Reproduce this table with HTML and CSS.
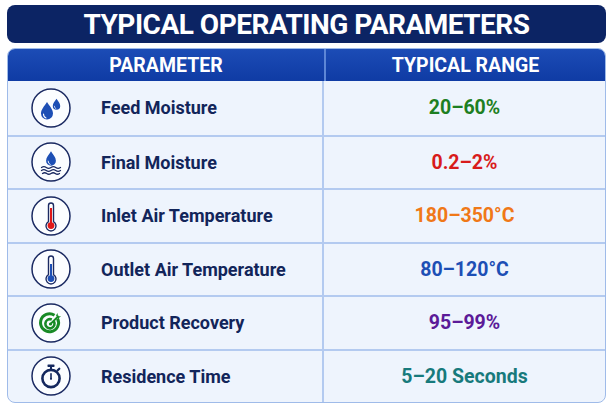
FILE: index.html
```html
<!DOCTYPE html>
<html>
<head>
<meta charset="utf-8">
<link rel="stylesheet" href="styles.css">
</head>
<body>
<div class="page">
  <h1 class="title">TYPICAL OPERATING PARAMETERS</h1>
  <div class="table">
    <div class="head">
      <div class="hcell">PARAMETER</div>
      <div class="hcell">TYPICAL RANGE</div>
    </div>
    <div class="row">
      <div class="pcell">
        <svg class="icon" viewBox="0 0 40 40">
          <circle cx="20" cy="20" r="19" class="ring"/>
          <path class="drop" transform="translate(16 24)" d="M0,-10 C2.5,-6 6,-2.5 6,1.5 A6,6 0 0 1 -6,1.5 C-6,-2.5 -2.5,-6 0,-10Z"/>
          <path class="hl" transform="translate(16 24)" d="M-3.5,2 Q-3.5,5 -1,6" />
          <path class="drop" transform="translate(25.5 17) scale(0.62)" d="M0,-10 C2.5,-6 6,-2.5 6,1.5 A6,6 0 0 1 -6,1.5 C-6,-2.5 -2.5,-6 0,-10Z"/>
          <path class="hl" transform="translate(25.5 17) scale(0.62)" d="M-3.5,2 Q-3.5,5 -1,6" />
        </svg>
        <span class="label">Feed Moisture</span>
      </div>
      <div class="vcell green">20–60%</div>
    </div>
    <div class="row">
      <div class="pcell">
        <svg class="icon" viewBox="0 0 40 40">
          <circle cx="20" cy="20" r="19" class="ring"/>
          <path class="drop" transform="translate(20 17.5) scale(0.82)" d="M0,-10 C2.5,-6 6,-2.5 6,1.5 A6,6 0 0 1 -6,1.5 C-6,-2.5 -2.5,-6 0,-10Z"/>
          <path class="hl" transform="translate(20 17.5) scale(0.82)" d="M-3.5,2 Q-3.5,5 -1,6" />
          <path class="wave" d="M10.5 25.5 q2.4 -1.6 4.75 0 t4.75 0 t4.75 0 t4.75 0"/>
          <path class="wave" d="M10.5 28.5 q2.4 -1.6 4.75 0 t4.75 0 t4.75 0 t4.75 0"/>
          <path class="wave" d="M11.5 31.5 q2.2 -1.5 4.25 0 t4.25 0 t4.25 0 t4.25 0"/>
        </svg>
        <span class="label">Final Moisture</span>
      </div>
      <div class="vcell red">0.2–2%</div>
    </div>
    <div class="row">
      <div class="pcell">
        <svg class="icon" viewBox="0 0 40 40">
          <circle cx="20" cy="20" r="19" class="ring"/>
          <path class="therm" d="M17.5 25.6 V9.5 A2.5 2.5 0 0 1 22.5 9.5 V25.6 A5 5 0 1 1 17.5 25.6Z"/>
          <rect x="19" y="12" width="2" height="15" fill="#e01818"/>
          <circle cx="20" cy="29.6" r="3.4" fill="#e01818"/>
        </svg>
        <span class="label">Inlet Air Temperature</span>
      </div>
      <div class="vcell orange">180–350°C</div>
    </div>
    <div class="row">
      <div class="pcell">
        <svg class="icon" viewBox="0 0 40 40">
          <circle cx="20" cy="20" r="19" class="ring"/>
          <path class="therm" d="M17.5 25.6 V9.5 A2.5 2.5 0 0 1 22.5 9.5 V25.6 A5 5 0 1 1 17.5 25.6Z"/>
          <rect x="19" y="15" width="2" height="12" fill="#1d4fb5"/>
          <circle cx="20" cy="29.6" r="3.4" fill="#1d4fb5"/>
        </svg>
        <span class="label">Outlet Air Temperature</span>
      </div>
      <div class="vcell blue">80–120°C</div>
    </div>
    <div class="row">
      <div class="pcell">
        <svg class="icon" viewBox="0 0 40 40">
          <circle cx="20" cy="20" r="19" class="ring"/>
          <path d="M26.5 15.5 A9 9 0 1 1 23.5 12.2" fill="none" stroke="#188a25" stroke-width="3"/>
          <path d="M22.8 18.2 A4.6 4.6 0 1 1 20.8 16.5" fill="none" stroke="#188a25" stroke-width="2.6"/>
          <circle cx="19.5" cy="21" r="1.6" fill="#188a25"/>
          <path d="M19.5 21 L27 13.5" stroke="#188a25" stroke-width="1.8" stroke-linecap="round"/>
          <path d="M25 12.5 L26.5 10 L27 13.5 L30 13 L27.5 15.5Z" fill="#188a25"/>
        </svg>
        <span class="label">Product Recovery</span>
      </div>
      <div class="vcell purple">95–99%</div>
    </div>
    <div class="row">
      <div class="pcell">
        <svg class="icon" viewBox="0 0 40 40">
          <circle cx="20" cy="20" r="19" class="ring"/>
          <circle cx="20" cy="22.5" r="8.6" fill="none" stroke="#14285e" stroke-width="2.6"/>
          <rect x="16.5" y="8.5" width="7" height="2.4" rx="0.6" fill="#14285e"/>
          <rect x="19" y="10.5" width="2" height="3.5" fill="#14285e"/>
          <path d="M26.5 14.5 L28.3 12.7" stroke="#14285e" stroke-width="2.2" stroke-linecap="round"/>
          <path d="M20 22.8 V17.8" stroke="#14285e" stroke-width="1.6" stroke-linecap="round"/>
          <circle cx="20" cy="22.8" r="1" fill="#14285e"/>
        </svg>
        <span class="label">Residence Time</span>
      </div>
      <div class="vcell teal">5–20 Seconds</div>
    </div>
  </div>
</div>
</body>
</html>
```
FILE: styles.css
```css
html, body {
  margin: 0;
  padding: 0;
  background: #ffffff;
}
body {
  width: 614px;
  height: 408px;
  overflow: hidden;
  font-family: Roboto, "Liberation Sans", sans-serif;
}
.page {
  padding: 5px 8px 0 7px;
  display: flex;
  flex-direction: column;
  gap: 5px;
}
.title {
  margin: 0;
  height: 38px;
  background: #0c2464;
  border-radius: 8px;
  color: #ffffff;
  font-size: 28px;
  font-weight: 700;
  letter-spacing: -0.5px;
  display: flex;
  align-items: center;
  justify-content: center;
}
.table {
  border: 1px solid #9fbbe9;
  border-radius: 8px;
  overflow: hidden;
  background: #eef4fd;
  display: flex;
  flex-direction: column;
}
.head {
  display: grid;
  grid-template-columns: 316px 1fr;
  height: 32px;
  background: linear-gradient(#1c4cb6, #0f3ba4);
}
.hcell {
  display: flex;
  align-items: center;
  justify-content: center;
  color: #ffffff;
  font-weight: 700;
  font-size: 19.5px;
}
.hcell + .hcell {
  border-left: 2px solid #5d86d6;
}
.row {
  display: grid;
  grid-template-columns: 316px 1fr;
  height: 53.5px;
  border-top: 2px solid #b3caf0;
  box-sizing: border-box;
}
.head + .row { border-top: none; }
.pcell {
  display: flex;
  align-items: center;
  padding-left: 23px;
  gap: 30px;
  border-right: 2px solid #b3caf0;
}
.icon {
  width: 40px;
  height: 40px;
  flex: none;
}
.ring {
  fill: #fbfdff;
  stroke: #1b2a62;
  stroke-width: 1.5;
}
.drop { fill: #1d4fb5; }
.hl { fill: none; stroke: #ffffff; stroke-width: 1.1; stroke-linecap: round; }
.wave { fill: none; stroke: #1b2a62; stroke-width: 1.3; stroke-linecap: round; }
.therm { fill: #ffffff; stroke: #1b2a62; stroke-width: 1.4; }
.label {
  color: #12255a;
  font-weight: 700;
  font-size: 18px;
}
.vcell {
  display: flex;
  align-items: center;
  justify-content: center;
  font-weight: 700;
  font-size: 19.5px;
}
.green { color: #1d7f22; }
.red { color: #d81b1b; }
.orange { color: #f07818; }
.blue { color: #1d4fb5; }
.purple { color: #5b1a98; }
.teal { color: #177a7c; }
```
